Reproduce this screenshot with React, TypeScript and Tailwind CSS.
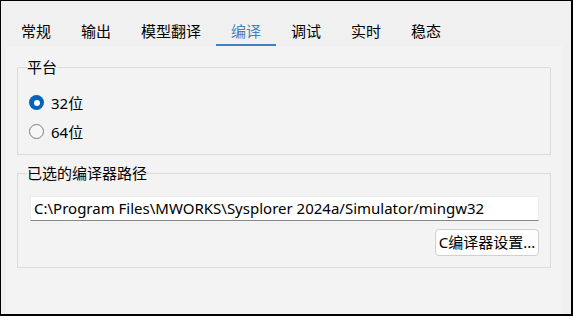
const tabs = ["常规", "输出", "模型翻译", "编译", "调试", "实时", "稳态"];
const font = { fontFamily: '"Noto Sans", "Noto Sans CJK SC", sans-serif' };

function Radio({ checked, label }: { checked: boolean; label: string }) {
  return (
    <div className="flex h-[29px] items-center gap-[7px]">
      {checked ? (
        <div className="flex h-[15px] w-[15px] items-center justify-center rounded-full bg-[#0563b8]">
          <div className="h-[6px] w-[6px] rounded-full bg-white" />
        </div>
      ) : (
        <div className="h-[15px] w-[15px] rounded-full border border-[#7c7c7c] bg-[#f6f6f6]" />
      )}
      <span className="text-[15px] leading-[20px] text-black">{label}</span>
    </div>
  );
}

export default function App() {
  return (
    <div
      className="flex h-[316px] w-[573px] flex-col border-t border-l border-r-2 border-b-2 border-black bg-[#f0f0f0]"
      style={font}
    >
      {/* Tabs */}
      <div className="flex h-[45px] items-end pl-[5px]">
        {tabs.map((t) => (
          <div
            key={t}
            className={`flex h-[29px] items-center border-b-2 px-[15px] text-[15px] leading-[20px] ${
              t === "编译" ? "border-[#3d82c6] text-[#3d82c6]" : "border-transparent text-black"
            }`}
          >
            {t}
          </div>
        ))}
      </div>

      {/* Pane */}
      <div className="mr-[9px] ml-[5px] flex-1 bg-[#f3f3f3] px-[11px] pt-[11px]">
        <fieldset className="border border-[#dcdcdc] px-[11px] pb-[8px]">
          <legend className="ml-[-2px] px-0 text-[15px] leading-[20px] text-black">平台</legend>
          <div className="pt-[11px]">
            <Radio checked label="32位" />
            <Radio checked={false} label="64位" />
          </div>
        </fieldset>

        <fieldset className="mt-[8px] border border-[#dcdcdc] pr-[11px] pb-[11px] pl-[12px]">
          <legend className="ml-[-3px] px-0 text-[15px] leading-[20px] text-black">已选的编译器路径</legend>
          <div className="pt-[13px]">
            <div className="flex h-[25px] items-center border border-[#ececec] border-b-[#868686] bg-white pl-[3px] text-[15px] text-black">
              C:\Program Files\MWORKS\Sysplorer 2024a/Simulator/mingw32
            </div>
            <div className="mt-[8px] flex justify-end">
              <button className="flex h-[27px] w-[104px] items-center justify-center rounded-[4px] border border-[#d0d0d0] bg-[#fdfdfd] text-[15px] text-black">
                C编译器设置...
              </button>
            </div>
          </div>
        </fieldset>
      </div>
    </div>
  );
}
